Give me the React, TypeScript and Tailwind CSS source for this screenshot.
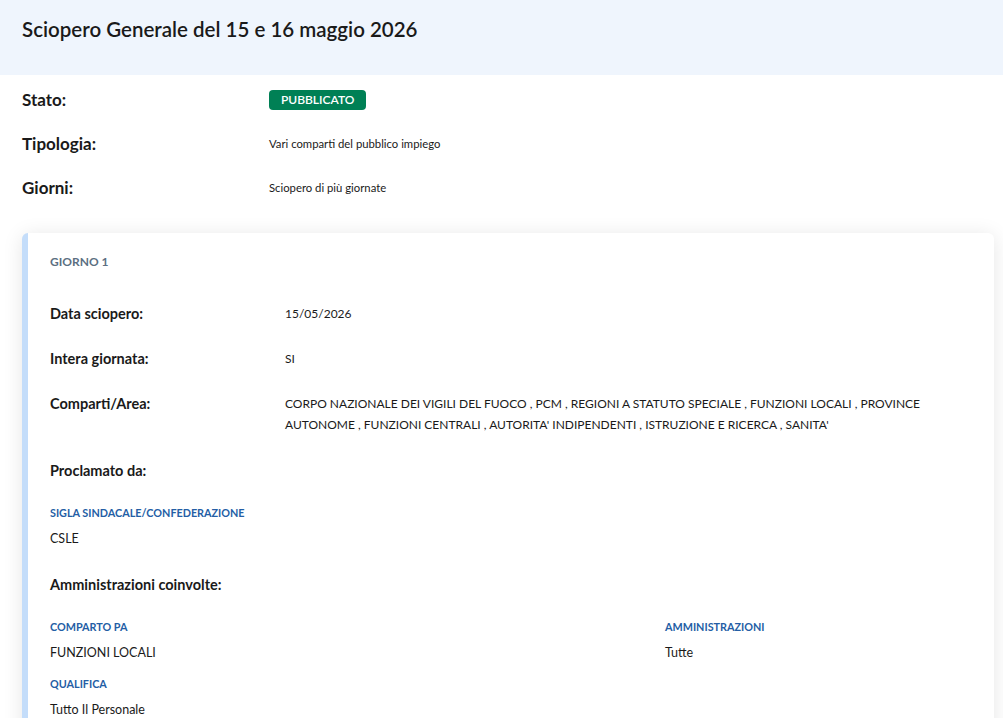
const compartiAree = [
  "CORPO NAZIONALE DEI VIGILI DEL FUOCO",
  "PCM",
  "REGIONI A STATUTO SPECIALE",
  "FUNZIONI LOCALI",
  "PROVINCE AUTONOME",
  "FUNZIONI CENTRALI",
  "AUTORITA' INDIPENDENTI",
  "ISTRUZIONE E RICERCA",
  "SANITA'",
];

function InfoRow({ label, children }: { label: string; children: React.ReactNode }) {
  return (
    <div className="flex items-center h-[44px]">
      <span className="w-[247px] shrink-0 text-[17px] font-bold text-[#1a1a1a]">{label}</span>
      <div className="text-[11.3px] text-[#1a1a1a]">{children}</div>
    </div>
  );
}

function DayRow({ label, value }: { label: string; value?: string }) {
  return (
    <div className="flex items-start">
      <span className="w-[235px] shrink-0 text-[14.5px] font-bold text-[#1a1a1a] leading-[22px]">{label}</span>
      {value && <span className="text-[12px] text-[#1a1a1a] leading-[21px] pr-4">{value}</span>}
    </div>
  );
}

function Field({ label, value }: { label: string; value: string }) {
  return (
    <div className="flex flex-col">
      <span className="text-[10.8px] font-bold text-[#245ea5] leading-[16px]">{label}</span>
      <span className="mt-[9px] text-[12.5px] text-[#1a1a1a] leading-[18px]">{value}</span>
    </div>
  );
}

export default function App() {
  return (
    <div className="min-h-screen bg-white font-['Lato','Liberation_Sans',sans-serif] overflow-hidden">
      {/* intestazione */}
      <header className="bg-[#eff5fd] h-[75px] px-[22px] pt-[14px]">
        <h1 className="text-[20.5px] font-semibold text-[#1a1a1a] leading-[30px]">
          Sciopero Generale del 15 e 16 maggio 2026
        </h1>
      </header>

      {/* riepilogo */}
      <section className="px-[22px] pt-[3px]">
        <InfoRow label="Stato:">
          <span className="inline-flex items-center h-[20px] px-[12px] rounded-[4px] bg-[#008055] text-white text-[12px] font-semibold">
            PUBBLICATO
          </span>
        </InfoRow>
        <InfoRow label="Tipologia:">Vari comparti del pubblico impiego</InfoRow>
        <InfoRow label="Giorni:">Sciopero di più giornate</InfoRow>
      </section>

      {/* giorno 1 */}
      <section className="mt-[23px] ml-[22px] mr-[9px]">
        <div className="rounded-[6px] border-l-[6px] border-[#c4ddfa] bg-white shadow-[0_2px_20px_rgba(0,0,0,0.1)] pl-[22px] pr-4 pt-[19px] pb-10">
          <h2 className="text-[12px] font-bold text-[#5c6f82] leading-[20px]">GIORNO 1</h2>

          <div className="mt-[31px] flex flex-col gap-[23px]">
            <DayRow label="Data sciopero:" value="15/05/2026" />
            <DayRow label="Intera giornata:" value="SI" />
            <DayRow label="Comparti/Area:" value={compartiAree.join(" , ")} />
          </div>

          <div className="mt-[25px]">
            <DayRow label="Proclamato da:" />
          </div>

          <div className="mt-[23px]">
            <Field label="SIGLA SINDACALE/CONFEDERAZIONE" value="CSLE" />
          </div>

          <div className="mt-[26px]">
            <DayRow label="Amministrazioni coinvolte:" />
          </div>

          <div className="mt-[23px] grid grid-cols-[615px_1fr] gap-y-[14px]">
            <Field label="COMPARTO PA" value="FUNZIONI LOCALI" />
            <Field label="AMMINISTRAZIONI" value="Tutte" />
            <Field label="QUALIFICA" value="Tutto Il Personale" />
          </div>
        </div>
      </section>
    </div>
  );
}
